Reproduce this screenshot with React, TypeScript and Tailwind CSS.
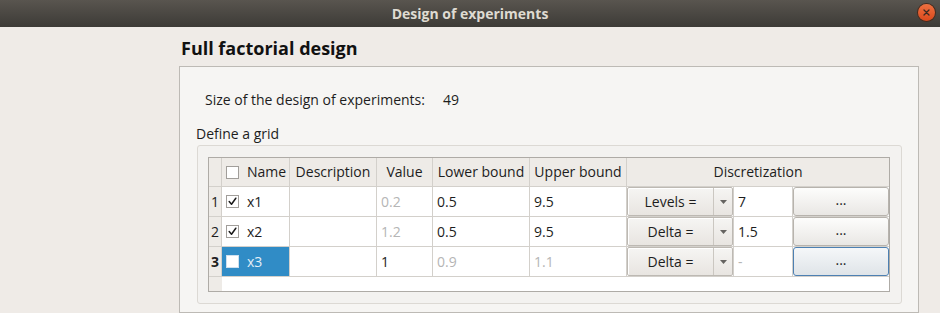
type Row = {
  n: number;
  checked: boolean;
  name: string;
  value: string;
  valueGrey: boolean;
  lower: string;
  upper: string;
  boundsGrey: boolean;
  mode: string;
  disc: string;
  discGrey: boolean;
  current: boolean;
};

const rows: Row[] = [
  { n: 1, checked: true, name: "x1", value: "0.2", valueGrey: true, lower: "0.5", upper: "9.5", boundsGrey: false, mode: "Levels =", disc: "7", discGrey: false, current: false },
  { n: 2, checked: true, name: "x2", value: "1.2", valueGrey: true, lower: "0.5", upper: "9.5", boundsGrey: false, mode: "Delta =", disc: "1.5", discGrey: false, current: false },
  { n: 3, checked: false, name: "x3", value: "1", valueGrey: false, lower: "0.9", upper: "1.1", boundsGrey: true, mode: "Delta =", disc: "-", discGrey: true, current: true },
];

function CheckBox({ checked, selected }: { checked: boolean; selected?: boolean }) {
  return (
    <span
      className={`flex h-[13px] w-[13px] shrink-0 items-center justify-center border bg-white ${
        selected ? "border-[#cfe0ee]" : "border-[#a19e9a]"
      }`}
    >
      {checked && (
        <svg width="9" height="9" viewBox="0 0 9 9" fill="none" aria-hidden>
          <path d="M1.2 4.6 3.5 7.2 7.8 1.2" stroke="#1a1a1a" strokeWidth="1.5" strokeLinecap="round" strokeLinejoin="round" />
        </svg>
      )}
    </span>
  );
}

function Combo({ label }: { label: string }) {
  return (
    <div className="flex h-full w-full rounded-[2px] border border-[#bdb9b3] bg-gradient-to-b from-[#f6f5f3] to-[#e8e5e1] shadow-[inset_1px_1px_0_#ffffff]">
      <div className="flex flex-1 items-center justify-center">{label}</div>
      <div className="flex w-[19px] items-center justify-center border-l border-[#cbc7c1]">
        <svg width="7" height="4" viewBox="0 0 7 4" aria-hidden>
          <path d="M0 0h7L3.5 4z" fill="#666461" />
        </svg>
      </div>
    </div>
  );
}

function DotsButton({ focus }: { focus: boolean }) {
  return (
    <div
      className={`flex h-full items-center justify-center rounded-[3px] border pb-[3px] ${
        focus
          ? "border-[#4d80b2] bg-gradient-to-b from-[#f5f7f9] to-[#dfe4e8]"
          : "border-[#b7b3ad] bg-gradient-to-b from-[#fdfdfc] to-[#e9e7e4]"
      }`}
    >
      ...
    </div>
  );
}

function Cell({ children, grey, className = "" }: { children?: React.ReactNode; grey?: boolean; className?: string }) {
  return (
    <div className={`flex items-center bg-white px-[4px] ${grey ? "text-[#b5b5b5]" : ""} ${className}`}>
      {children}
    </div>
  );
}

function GridTable() {
  return (
    <div className="border border-[#aeaba6]">
      <div className="grid grid-cols-[12px_67px_86px_55px_96px_96px_106px_58px_96px] grid-rows-[28px_29px_29px_29px_14px] gap-px bg-[#d3d0cb]">
        {/* header */}
        <div className="bg-[#eeebe7]" />
        <div className="flex items-center gap-[8px] bg-[#eeebe7] pl-[4px]">
          <CheckBox checked={false} />
          <span>Name</span>
        </div>
        <div className="flex items-center justify-center bg-[#eeebe7]">Description</div>
        <div className="flex items-center justify-center bg-[#eeebe7]">Value</div>
        <div className="flex items-center justify-center bg-[#eeebe7]">Lower bound</div>
        <div className="flex items-center justify-center bg-[#eeebe7]">Upper bound</div>
        <div className="col-span-3 flex items-center justify-center bg-[#eeebe7]">Discretization</div>

        {rows.map((r) => (
          <div key={r.n} className="contents">
            <div className={`flex items-center justify-center bg-[#eeebe7] ${r.current ? "font-bold" : ""}`}>
              {r.n}
            </div>
            <div
              className={`flex items-center gap-[8px] pl-[4px] ${
                r.current ? "bg-[#308cc6] text-[#e3eef7]" : "bg-white"
              }`}
            >
              <CheckBox checked={r.checked} selected={r.current} />
              <span>{r.name}</span>
            </div>
            <Cell />
            <Cell grey={r.valueGrey}>{r.value}</Cell>
            <Cell grey={r.boundsGrey}>{r.lower}</Cell>
            <Cell grey={r.boundsGrey}>{r.upper}</Cell>
            <div className="bg-white">
              <Combo label={r.mode} />
            </div>
            <Cell grey={r.discGrey}>{r.disc}</Cell>
            <div className="bg-white">
              <DotsButton focus={r.current} />
            </div>
          </div>
        ))}

        <div className="col-span-9 flex">
          <div className="w-[13px] bg-[#eeebe7]" />
          <div className="flex-1 bg-white" />
        </div>
      </div>
    </div>
  );
}

export default function App() {
  return (
    <div className="flex h-[313px] w-[940px] flex-col overflow-hidden bg-[#efebe7] font-['Open_Sans',sans-serif] text-[14px] leading-[20px] text-[#1d1d1d]">
      {/* window title bar */}
      <div className="relative flex h-[27px] shrink-0 items-center justify-center bg-gradient-to-b from-[#59554f] to-[#3d3b37]">
        <span className="text-[14px] font-bold text-[#dfdbd2]">Design of experiments</span>
        <div className="absolute right-[5px] top-[4px] flex h-[17px] w-[17px] items-center justify-center rounded-full bg-gradient-to-b from-[#f0703f] to-[#d9481b] shadow-[0_0_0_1px_#4a2a1c]">
          <svg width="7" height="7" viewBox="0 0 7 7" aria-hidden>
            <path d="M1 1l5 5M6 1 1 6" stroke="#3b2a22" strokeWidth="1.3" strokeLinecap="round" />
          </svg>
        </div>
      </div>

      <div className="flex flex-1 flex-col pl-[179px] pr-[21px]">
        <h1 className="pl-[2px] pt-[9px] text-[18px] font-bold leading-[24px] text-[#111]">Full factorial design</h1>

        <div className="mt-[6px] flex-1 border border-[#bdbab5] bg-[#f6f5f3]">
          <div className="flex gap-[18px] pl-[25px] pt-[23px]">
            <span>Size of the design of experiments:</span>
            <span>49</span>
          </div>
          <div className="mt-[14px] pl-[16px]">Define a grid</div>
          <div className="ml-[17px] mr-[16px] mt-[1px] rounded-[3px] border border-[#dcd9d4] bg-[#f3f2f0] pb-[11px] pl-[10px] pr-[11px] pt-[11px]">
            <GridTable />
          </div>
        </div>
      </div>
    </div>
  );
}
